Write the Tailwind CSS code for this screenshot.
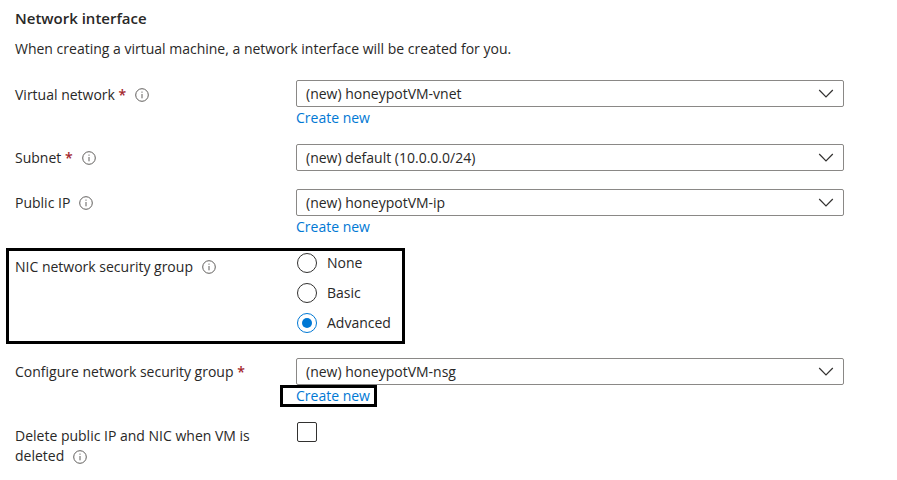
<!DOCTYPE html>
<html lang="en">
<head>
<meta charset="utf-8">
<meta name="viewport" content="width=device-width, initial-scale=1">
<title>Network interface</title>
<script src="https://cdn.jsdelivr.net/npm/@tailwindcss/browser@4"></script>
</head>
<body class="bg-white font-['Open_Sans','Noto_Sans',sans-serif] text-[14px] leading-5 text-[#292827]">
<svg class="hidden" aria-hidden="true">
  <symbol id="info" viewBox="0 0 14 14">
    <circle cx="7" cy="7" r="6.3" fill="none" stroke="#605e5c" stroke-width="1"/>
    <path d="M7 6v4.3" fill="none" stroke="#605e5c" stroke-width="1"/>
    <circle cx="7" cy="4.1" r=".7" fill="#605e5c"/>
  </symbol>
  <symbol id="chevron" viewBox="0 0 16 9">
    <path d="M1.2 1l6.8 6.8 6.8-6.8" fill="none" stroke="#323130" stroke-width="1.2"/>
  </symbol>
</svg>
<main class="pt-2 pr-[53px] pl-[15px]">
  <h2 class="text-[15px] font-semibold">Network interface</h2>
  <p class="mt-[11px]">When creating a virtual machine, a network interface will be created for you.</p>
  <form class="mt-[21px]">
    <div class="flex items-start">
      <div class="flex w-[281px] shrink-0 items-center pt-[5px]">
        <label for="vnet">Virtual network <span class="font-semibold text-[#a4262c]">*</span></label>
        <button type="button" aria-label="About virtual network" class="ml-[9px]"><svg class="size-[14px]"><use href="#info"/></svg></button>
      </div>
      <div class="flex grow flex-col items-start">
        <div class="relative w-full">
          <select id="vnet" class="block h-[27px] w-full appearance-none rounded-xs border border-[#8a8886] bg-white px-[9px]"><option>(new) honeypotVM-vnet</option></select>
          <svg class="pointer-events-none absolute top-[9px] right-[10px] h-[9px] w-4"><use href="#chevron"/></svg>
        </div>
        <a href="#" class="leading-[22px] text-[#0078d4]">Create new</a>
      </div>
    </div>

    <div class="mt-[15px] flex items-start">
      <div class="flex w-[281px] shrink-0 items-center pt-1">
        <label for="subnet">Subnet <span class="font-semibold text-[#a4262c]">*</span></label>
        <button type="button" aria-label="About subnet" class="ml-[9px]"><svg class="size-[14px]"><use href="#info"/></svg></button>
      </div>
      <div class="relative grow">
        <select id="subnet" class="block h-[27px] w-full appearance-none rounded-xs border border-[#8a8886] bg-white px-[9px]"><option>(new) default (10.0.0.0/24)</option></select>
        <svg class="pointer-events-none absolute top-[9px] right-[10px] h-[9px] w-4"><use href="#chevron"/></svg>
      </div>
    </div>

    <div class="mt-[18px] flex items-start">
      <div class="flex w-[281px] shrink-0 items-center pt-1">
        <label for="ip">Public IP</label>
        <button type="button" aria-label="About public IP" class="ml-[9px]"><svg class="size-[14px]"><use href="#info"/></svg></button>
      </div>
      <div class="flex grow flex-col items-start">
        <div class="relative w-full">
          <select id="ip" class="block h-[27px] w-full appearance-none rounded-xs border border-[#8a8886] bg-white px-[9px]"><option>(new) honeypotVM-ip</option></select>
          <svg class="pointer-events-none absolute top-[9px] right-[10px] h-[9px] w-4"><use href="#chevron"/></svg>
        </div>
        <a href="#" class="leading-[22px] text-[#0078d4]">Create new</a>
      </div>
    </div>

    <div role="radiogroup" aria-labelledby="nsg-type" class="mt-[10px] -ml-[9px] flex w-fit items-start border-3 border-black pt-[2px] pr-[11px] pb-[8px] pl-[6px]">
      <div class="flex w-[281px] shrink-0 items-center pt-1">
        <span id="nsg-type">NIC network security group</span>
        <button type="button" aria-label="About NIC network security group" class="ml-[9px]"><svg class="size-[14px]"><use href="#info"/></svg></button>
      </div>
      <div class="flex flex-col gap-[10px] pl-px">
        <label class="flex items-center gap-[10px]"><input type="radio" name="nsg" class="grid size-5 appearance-none place-items-center rounded-full border border-[#323130] before:size-[10px] before:rounded-full checked:border-[#0078d4] checked:before:bg-[#0078d4]">None</label>
        <label class="flex items-center gap-[10px]"><input type="radio" name="nsg" class="grid size-5 appearance-none place-items-center rounded-full border border-[#323130] before:size-[10px] before:rounded-full checked:border-[#0078d4] checked:before:bg-[#0078d4]">Basic</label>
        <label class="flex items-center gap-[10px]"><input type="radio" name="nsg" checked class="grid size-5 appearance-none place-items-center rounded-full border border-[#323130] before:size-[10px] before:rounded-full checked:border-[#0078d4] checked:before:bg-[#0078d4]">Advanced</label>
      </div>
    </div>

    <div class="mt-[14px] flex items-start">
      <div class="w-[281px] shrink-0 pt-1">
        <label for="nsg-config">Configure network security group <span class="font-semibold text-[#a4262c]">*</span></label>
      </div>
      <div class="flex grow flex-col items-start">
        <div class="relative w-full">
          <select id="nsg-config" class="block h-[27px] w-full appearance-none rounded-xs border border-[#8a8886] bg-white px-[9px]"><option>(new) honeypotVM-nsg</option></select>
          <svg class="pointer-events-none absolute top-[9px] right-[10px] h-[9px] w-4"><use href="#chevron"/></svg>
        </div>
        <a href="#" class="-ml-4 border-3 border-black pr-1 pl-[13px] leading-4 text-[#0078d4]">Create new</a>
      </div>
    </div>

    <div class="mt-[15px] flex items-start">
      <div class="w-[281px] shrink-0 pt-1 pr-5">
        <label for="delete-ip">Delete public IP and NIC when VM is deleted</label>
        <button type="button" aria-label="About deleting public IP and NIC" class="ml-[5px] align-middle"><svg class="size-[14px]"><use href="#info"/></svg></button>
      </div>
      <input id="delete-ip" type="checkbox" class="ml-px size-5 appearance-none rounded-xs border border-[#323130] bg-white">
    </div>
  </form>
</main>
</body>
</html>
